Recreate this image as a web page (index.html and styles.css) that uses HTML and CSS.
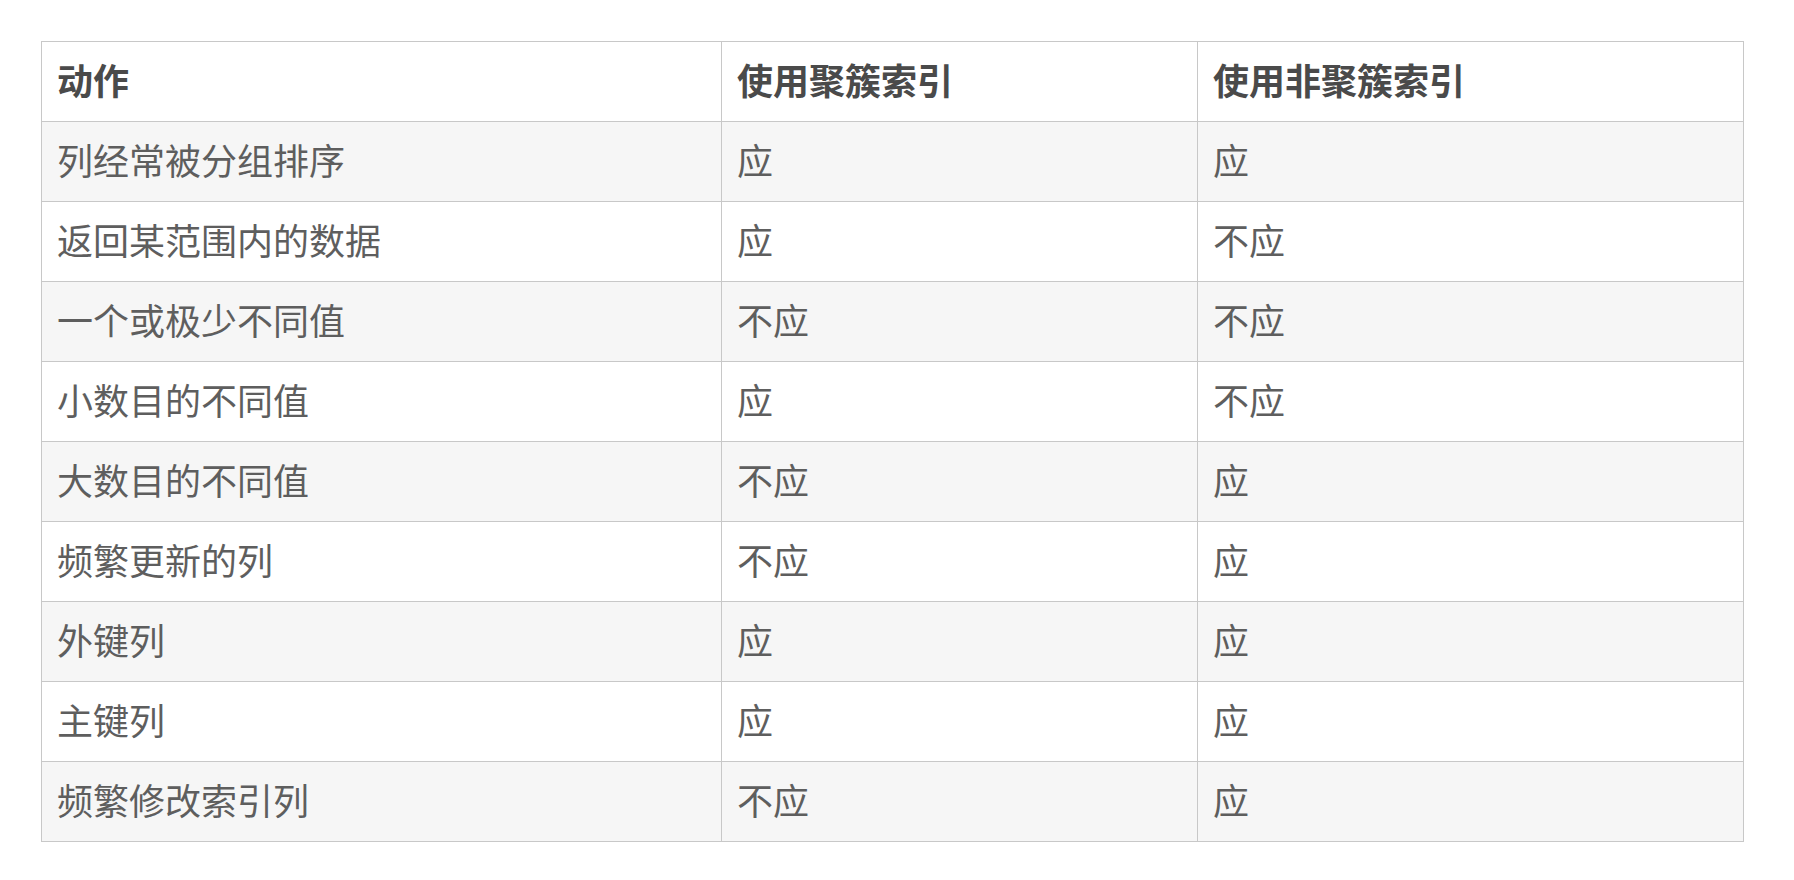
FILE: index.html
```html
<!DOCTYPE html>
<html lang="zh">
<head>
<meta charset="utf-8">
<link rel="stylesheet" href="styles.css">
</head>
<body>
<table class="idx">
  <colgroup><col class="c1"><col class="c2"><col class="c3"></colgroup>
  <thead>
    <tr><th>动作</th><th>使用聚簇索引</th><th>使用非聚簇索引</th></tr>
  </thead>
  <tbody>
    <tr><td>列经常被分组排序</td><td>应</td><td>应</td></tr>
    <tr><td>返回某范围内的数据</td><td>应</td><td>不应</td></tr>
    <tr><td>一个或极少不同值</td><td>不应</td><td>不应</td></tr>
    <tr><td>小数目的不同值</td><td>应</td><td>不应</td></tr>
    <tr><td>大数目的不同值</td><td>不应</td><td>应</td></tr>
    <tr><td>频繁更新的列</td><td>不应</td><td>应</td></tr>
    <tr><td>外键列</td><td>应</td><td>应</td></tr>
    <tr><td>主键列</td><td>应</td><td>应</td></tr>
    <tr><td>频繁修改索引列</td><td>不应</td><td>应</td></tr>
  </tbody>
</table>
</body>
</html>
```
FILE: styles.css
```css
html, body {
  margin: 0;
  padding: 0;
  background: #fff;
}
body {
  padding: 41px 0 0 41px;
  font-family: "Noto Sans CJK SC", "Noto Sans", sans-serif;
  color: #5e5e5e;
}
.idx {
  border-collapse: collapse;
  width: 1702px;
  table-layout: fixed;
  font-size: 36px;
}
.c1 { width: 680px; }
.c2 { width: 476px; }
.c3 { width: 546px; }
.idx th, .idx td {
  border: 1px solid #c8c8c8;
  height: 80px;
  padding: 0 15px 5px;
  text-align: left;
  vertical-align: middle;
  box-sizing: border-box;
  line-height: 1;
}
.idx th {
  font-weight: 700;
  color: #4a4a4a;
  background: #fff;
  font-size: 36px;
}
.idx td {
  font-weight: 400;
}
.idx tbody tr:nth-child(odd) td {
  background: #f6f6f6;
}
.idx tbody tr:nth-child(even) td {
  background: #fff;
}
```
